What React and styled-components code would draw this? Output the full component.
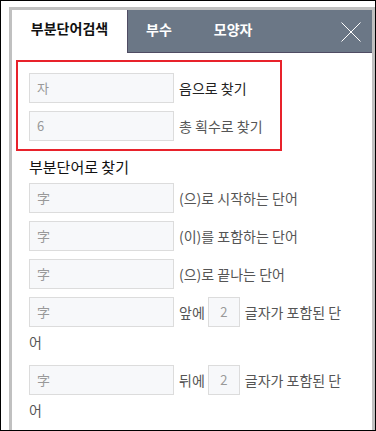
import styled, { createGlobalStyle } from "styled-components";

const GlobalStyle = createGlobalStyle`
  html, body {
    margin: 0;
    padding: 0;
    background: #fff;
  }
  body {
    font-family: "Noto Sans CJK KR", "Noto Sans", sans-serif;
  }
`;

const Window = styled.div`
  box-sizing: border-box;
  width: 376px;
  height: 431px;
  border: 1px solid #000;
  background: #fff;
  overflow: hidden;
  display: flex;
  flex-direction: column;
`;

const Panel = styled.div`
  margin: 6px 0 0 8px;
  border: 3px solid #c0c0c0;
  border-bottom: none;
  flex: 1;
  display: flex;
  flex-direction: column;
`;

const TabBar = styled.div`
  display: flex;
  height: 43px;
`;

const ActiveTab = styled.div`
  width: 115px;
  display: flex;
  align-items: center;
  justify-content: center;
  padding-bottom: 7px;
  box-sizing: border-box;
  font-size: 14px;
  font-weight: 700;
  color: #111;
  background: #fff;
`;

const TabRest = styled.div`
  flex: 1;
  display: flex;
  align-items: center;
  height: 37px;
  background: #6b7786;
  border-left: 1px solid #4f4c63;
  border-bottom: 1px solid #4f4c63;
  padding-bottom: 5px;
`;

const Tab = styled.div`
  padding: 0 24px 0 18px;
  font-size: 14px;
  font-weight: 700;
  color: #fff;
`;

const CloseButton = styled.div`
  margin-left: auto;
  margin-right: 11px;
  margin-top: 7px;
  width: 20px;
  height: 20px;
  display: flex;
`;

const Content = styled.div`
  padding: 7px 20px 0 17px;
`;

const Highlight = styled.div`
  width: 251px;
  margin-left: -13px;
  border: 2px solid #e8222b;
  padding: 11px 0 8px 11px;
  display: flex;
  flex-direction: column;
  gap: 8px;
`;

const SectionTitle = styled.div`
  margin-top: 6px;
  height: 20px;
  line-height: 20px;
  font-size: 15px;
  color: #111;
`;

const Rows = styled.div`
  margin-top: 6px;
  display: flex;
  flex-direction: column;
  gap: 8px;
`;

const Row = styled.div`
  line-height: 30px;
  font-size: 14px;
  color: ${(props) => props.color || "#555"};
`;

const Field = styled.span`
  display: inline-block;
  box-sizing: border-box;
  width: ${(props) => (props.small ? "32px" : "145px")};
  height: 30px;
  vertical-align: top;
  border: 1px solid #dcdcdc;
  background: #f7f8fa;
  color: #999;
  font-size: 13px;
  line-height: 28px;
  padding-left: ${(props) => (props.small ? "0" : "7px")};
  text-align: ${(props) => (props.small ? "center" : "left")};
  margin: ${(props) => (props.small ? "0 5px 0 3px" : "0 5px 0 0")};
`;

const XIcon = () => (
  <svg width="20" height="20" viewBox="0 0 20 20">
    <path d="M0.5 0.5 L19.5 19.5 M19.5 0.5 L0.5 19.5" stroke="#fff" strokeWidth="1" />
  </svg>
);

const App = () => {
  return (
    <Window>
      <GlobalStyle />
      <Panel>
        <TabBar>
          <ActiveTab>부분단어검색</ActiveTab>
          <TabRest>
            <Tab>부수</Tab>
            <Tab>모양자</Tab>
            <CloseButton>
              <XIcon />
            </CloseButton>
          </TabRest>
        </TabBar>
        <Content>
          <Highlight>
            <Row color="#222">
              <Field>자</Field>음으로 찾기
            </Row>
            <Row>
              <Field>6</Field>총 획수로 찾기
            </Row>
          </Highlight>
          <SectionTitle>부분단어로 찾기</SectionTitle>
          <Rows>
            <Row>
              <Field>字</Field>(으)로 시작하는 단어
            </Row>
            <Row>
              <Field>字</Field>(이)를 포함하는 단어
            </Row>
            <Row>
              <Field>字</Field>(으)로 끝나는 단어
            </Row>
            <Row>
              <Field>字</Field>앞에<Field small>2</Field>글자가 포함된 단어
            </Row>
            <Row>
              <Field>字</Field>뒤에<Field small>2</Field>글자가 포함된 단어
            </Row>
          </Rows>
        </Content>
      </Panel>
    </Window>
  );
};

export default App;
